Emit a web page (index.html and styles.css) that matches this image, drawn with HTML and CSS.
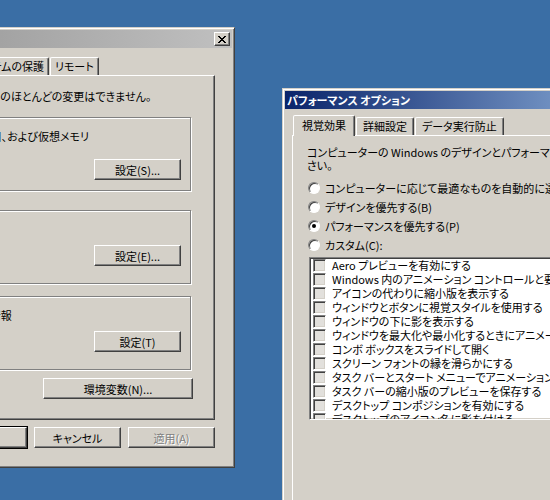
FILE: index.html
```html
<!DOCTYPE html>
<html lang="ja">
<head>
    <meta charset="UTF-8">
    <title>パフォーマンス オプション</title>
    <link rel="stylesheet" href="styles.css">
</head>
<body>
    <div class="desktop">

        <!-- System properties dialog (inactive, behind) -->
        <div class="window sysprop">
            <div class="titlebar inactive">
                <span class="title">システムのプロパティ</span>
                <button class="close" type="button">
                    <svg width="8" height="7" viewBox="0 0 8 7" shape-rendering="crispEdges">
                        <path fill="#000" d="M0 0h2v1H0z M6 0h2v1H6z M1 1h2v1H1z M5 1h2v1H5z M2 2h4v1H2z M3 3h2v1H3z M2 4h4v1H2z M1 5h2v1H1z M5 5h2v1H5z M0 6h2v1H0z M6 6h2v1H6z"/>
                    </svg>
                </button>
            </div>
            <div class="window-body">
                <div class="tabs">
                    <div class="tab">コンピューター名</div>
                    <div class="tab">ハードウェア</div>
                    <div class="tab selected">詳細設定</div>
                    <div class="tab">システムの保護</div>
                    <div class="tab">リモート</div>
                </div>
                <div class="tab-panel sys-panel">
                    <p class="note">Administrator としてログオンしない場合は、これらのほとんどの変更はできません。</p>

                    <div class="group g-perf">
                        <span class="group-title">パフォーマンス</span>
                        <p>視覚効果、プロセッサのスケジュール、メモリ使用、および仮想メモリ</p>
                        <div class="group-actions"><button class="btn" type="button">設定(S)...</button></div>
                    </div>

                    <div class="group g-profile">
                        <span class="group-title">ユーザー プロファイル</span>
                        <p>ログオンに関連したデスクトップ設定</p>
                        <div class="group-actions"><button class="btn" type="button">設定(E)...</button></div>
                    </div>

                    <div class="group g-startup">
                        <span class="group-title">起動と回復</span>
                        <p>システムの起動、システム障害、およびデバッグ情報</p>
                        <div class="group-actions"><button class="btn" type="button">設定(T)</button></div>
                    </div>

                    <div class="panel-actions"><button class="btn btn-wide" type="button">環境変数(N)...</button></div>
                </div>
                <div class="dialog-buttons">
                    <button class="btn btn-default" type="button">OK</button>
                    <button class="btn" type="button">キャンセル</button>
                    <button class="btn" type="button" disabled>適用(A)</button>
                </div>
            </div>
        </div>

        <!-- Performance options dialog (active, in front) -->
        <div class="window perf">
            <div class="titlebar active">
                <span class="title">パフォーマンス オプション</span>
            </div>
            <div class="window-body">
                <div class="tabs">
                    <div class="tab selected">視覚効果</div>
                    <div class="tab">詳細設定</div>
                    <div class="tab">データ実行防止</div>
                </div>
                <div class="tab-panel perf-panel">
                    <p class="intro">コンピューターの Windows のデザインとパフォーマンスの設定を選択してくだ<br>さい。</p>

                    <div class="radio-list">
                        <div class="radio-row"><span class="radio"></span>コンピューターに応じて最適なものを自動的に選択する(L)</div>
                        <div class="radio-row"><span class="radio"></span>デザインを優先する(B)</div>
                        <div class="radio-row"><span class="radio checked"></span>パフォーマンスを優先する(P)</div>
                        <div class="radio-row"><span class="radio"></span>カスタム(C):</div>
                    </div>

                    <div class="listbox">
                        <div class="list-item"><span class="check"></span>Aero プレビューを有効にする</div>
                        <div class="list-item"><span class="check"></span>Windows 内のアニメーション コントロールと要素</div>
                        <div class="list-item"><span class="check"></span>アイコンの代わりに縮小版を表示する</div>
                        <div class="list-item"><span class="check"></span>ウィンドウとボタンに視覚スタイルを使用する</div>
                        <div class="list-item"><span class="check"></span>ウィンドウの下に影を表示する</div>
                        <div class="list-item"><span class="check"></span>ウィンドウを最大化や最小化するときにアニメーションで表示する</div>
                        <div class="list-item"><span class="check"></span>コンボ ボックスをスライドして開く</div>
                        <div class="list-item"><span class="check"></span>スクリーン フォントの縁を滑らかにする</div>
                        <div class="list-item"><span class="check"></span>タスク バーとスタート メニューでアニメーションを表示する</div>
                        <div class="list-item"><span class="check"></span>タスク バーの縮小版のプレビューを保存する</div>
                        <div class="list-item"><span class="check"></span>デスクトップ コンポジションを有効にする</div>
                        <div class="list-item"><span class="check"></span>デスクトップのアイコン名に影を付ける</div>
                        <div class="list-item"><span class="check"></span>マウス ポインターの下に影を表示する</div>
                    </div>
                </div>
            </div>
        </div>

    </div>
</body>
</html>
```

FILE: styles.css
```css
body {
    margin: 0;
    background: #3a6ea5;
    font-family: "Noto Sans CJK JP", sans-serif;
    font-size: 11px;
    font-feature-settings: "palt";
    color: #000;
}
p {
    margin: 0;
}
.desktop {
    position: relative;
    width: 550px;
    height: 500px;
    overflow: hidden;
}

/* classic 3d window frame */
.window {
    position: absolute;
    box-sizing: border-box;
    display: flex;
    flex-direction: column;
    background: #d4d0c8;
    border: 1px solid;
    border-color: #d4d0c8 #404040 #404040 #d4d0c8;
    box-shadow: inset 1px 1px #fff, inset -1px -1px #808080;
    padding: 2px;
    overflow: hidden;
}
.sysprop {
    left: -282px;
    top: 27px;
    width: 517px;
    height: 441px;
}
.perf {
    left: 282px;
    top: 88px;
    width: 420px;
    height: 430px;
}

.titlebar {
    flex: none;
    display: flex;
    align-items: center;
    height: 18px;
    padding: 0 2px;
    font-weight: bold;
    white-space: nowrap;
}
.titlebar.inactive {
    background: linear-gradient(to right, #808080, #c0c0c0);
    color: #d4d0c8;
}
.titlebar.active {
    background: linear-gradient(to right, #0a246a, #a6caf0);
    color: #fff;
}
.title {
    flex: 1;
}
.close {
    display: flex;
    align-items: center;
    justify-content: center;
    width: 16px;
    height: 14px;
    padding: 0;
    background: #d4d0c8;
    border: 1px solid;
    border-color: #fff #404040 #404040 #fff;
    box-shadow: inset -1px -1px #808080;
}

.window-body {
    flex: 1;
    display: flex;
    flex-direction: column;
}
.sysprop .window-body {
    padding: 7px 17px 0 17px;
}
.perf .window-body {
    padding: 6px 0 0 7px;
}

/* tabs */
.tabs {
    display: flex;
    align-items: flex-end;
    gap: 1px;
    height: 20px;
    padding-left: 1px;
}
.sysprop .tabs {
    padding-left: 6px;
}
.tab {
    box-sizing: border-box;
    height: 18px;
    padding: 0 4px;
    border: 1px solid;
    border-bottom: 0;
    border-color: #fff #404040 transparent #fff;
    border-radius: 2px 2px 0 0;
    box-shadow: inset -1px 0 #808080;
    line-height: 16px;
    white-space: nowrap;
}
.tab.selected {
    position: relative;
    z-index: 1;
    height: 21px;
    margin-bottom: -1px;
    padding: 0 6px;
    background: #d4d0c8;
    line-height: 18px;
}
.perf .tab {
    padding: 0 6px;
}
.perf .tab.selected {
    padding: 0 8px;
}

.tab-panel {
    box-sizing: border-box;
    border: 1px solid;
    border-color: #fff #404040 #404040 #fff;
    box-shadow: inset -1px -1px #808080;
}
.sys-panel {
    height: 345px;
    padding: 13px 23px 0 20px;
}
.perf-panel {
    flex: 1;
    padding: 10px 0 0 14px;
    white-space: nowrap;
}

.note {
    line-height: 14px;
    white-space: nowrap;
}

/* etched group boxes */
.group {
    position: relative;
    box-sizing: border-box;
    height: 74px;
    padding: 11px 9px 0 14px;
    border: 1px solid #808080;
    box-shadow: inset 1px 1px #fff, 1px 1px #fff;
    line-height: 14px;
    white-space: nowrap;
}
.group-title {
    position: absolute;
    top: -8px;
    left: 6px;
    padding: 0 2px;
    background: #d4d0c8;
}
.g-perf {
    margin-top: 14px;
}
.g-profile {
    margin-top: 19px;
}
.g-startup {
    margin-top: 12px;
}
.group-actions {
    display: flex;
    justify-content: flex-end;
    margin-top: 9px;
}
.g-perf .group-actions {
    margin-top: 16px;
}
.panel-actions {
    display: flex;
    justify-content: flex-end;
    margin: 8px -2px 0 0;
}

/* push buttons */
.btn {
    box-sizing: border-box;
    width: 87px;
    height: 21px;
    padding: 0;
    background: #d4d0c8;
    border: 1px solid;
    border-color: #fff #404040 #404040 #fff;
    box-shadow: inset -1px -1px #808080;
    font: inherit;
    font-feature-settings: "palt";
    color: #000;
}
.btn-wide {
    width: 150px;
}
.btn-default {
    outline: 1px solid #000;
}
.btn:disabled {
    color: #808080;
    text-shadow: 1px 1px #fff;
}
.dialog-buttons {
    display: flex;
    justify-content: flex-end;
    gap: 7px;
    margin-top: 7px;
}

/* radio buttons */
.intro {
    line-height: 13px;
}
.radio-list {
    margin-top: 6px;
}
.radio-row {
    display: flex;
    align-items: center;
    height: 19px;
}
.radio {
    position: relative;
    flex: none;
    box-sizing: border-box;
    width: 12px;
    height: 12px;
    margin: 0 5px 0 1px;
    border-radius: 50%;
    border: 1px solid;
    border-color: #808080 #fff #fff #808080;
    box-shadow: inset 1px 1px #404040;
    background: #fff;
}
.radio.checked::after {
    content: "";
    position: absolute;
    left: 3px;
    top: 3px;
    width: 4px;
    height: 4px;
    border-radius: 50%;
    background: #000;
}

/* visual effects list */
.listbox {
    box-sizing: border-box;
    height: 163px;
    margin: 3px 0 0 2px;
    padding: 0 0 0 3px;
    border: 1px solid;
    border-color: #808080 #fff #fff #808080;
    box-shadow: inset 1px 1px #404040, inset -1px -1px #d4d0c8;
    background: #fff;
    overflow: hidden;
}
.list-item {
    display: flex;
    align-items: center;
    height: 14px;
}
.check {
    flex: none;
    box-sizing: border-box;
    width: 13px;
    height: 13px;
    margin-right: 6px;
    border: 1px solid;
    border-color: #808080 #fff #fff #808080;
    box-shadow: inset 1px 1px #404040, inset -1px -1px #d4d0c8;
    background: #e2e0dc;
}
```
